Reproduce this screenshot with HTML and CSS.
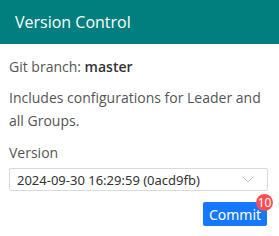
FILE: index.html
```html
<!DOCTYPE html>
<html lang="en">
<head>
    <meta charset="UTF-8">
    <meta name="viewport" content="width=device-width, initial-scale=1.0">
    <title>Version Control</title>
    <link rel="stylesheet" href="styles.css">
</head>
<body>
    <div class="panel">
        <div class="panel-header">Version Control</div>
        <div class="panel-body">
            <p class="branch">Git branch: <b>master</b></p>
            <p class="note">Includes configurations for Leader and all Groups.</p>
            <label class="field-label" for="version">Version</label>
            <div class="select" id="version">
                <span class="select-value">2024-09-30 16:29:59 (0acd9fb)</span>
                <svg class="select-arrow" width="12" height="7" viewBox="0 0 12 7">
                    <path d="M0.5 0.5 L6 6 L11.5 0.5" fill="none" stroke="#bfbfbf" stroke-width="1"/>
                </svg>
            </div>
            <div class="actions">
                <button class="btn-commit">Commit<span class="badge">10</span></button>
            </div>
        </div>
    </div>
</body>
</html>
```

FILE: styles.css
```css
body {
    margin: 0;
    font-family: 'Open Sans', 'Noto Sans', sans-serif;
    font-size: 14px;
    color: #555;
    background-color: #fff;
}
.panel {
    width: 279px;
}
.panel-header {
    height: 44px;
    background-color: #007f7e;
    color: #fff;
    font-size: 16px;
    font-weight: 500;
    line-height: 44px;
    padding-left: 15px;
    box-sizing: border-box;
}
.panel-body {
    padding: 11px 11px 0 9px;
}
p {
    margin: 0;
    line-height: 23px;
}
.branch b {
    font-weight: 600;
    color: #333;
}
.note {
    margin-top: 8px;
    width: 260px;
}
.field-label {
    display: block;
    margin-top: 9px;
    line-height: 23px;
}
.select {
    margin-top: 4px;
    height: 23px;
    border: 1px solid #d9d9d9;
    border-radius: 2px;
    box-sizing: border-box;
    display: flex;
    align-items: center;
    justify-content: space-between;
    padding: 0 13px 0 7px;
}
.select-value {
    font-family: 'Noto Sans', sans-serif;
    font-size: 13px;
    color: #333;
}
.actions {
    display: flex;
    justify-content: flex-end;
    margin-top: 11px;
}
.btn-commit {
    position: relative;
    height: 24px;
    width: 64px;
    padding: 0;
    border: none;
    border-radius: 2px;
    background-color: #1677ff;
    color: #fff;
    font-family: 'Noto Sans', sans-serif;
    font-size: 14px;
    margin-right: 1px;
}
.badge {
    position: absolute;
    top: -8px;
    right: -6px;
    width: 17px;
    height: 17px;
    border-radius: 50%;
    background-color: #ff4d4f;
    color: #fff;
    font-size: 12px;
    line-height: 17px;
    text-align: center;
}
```
